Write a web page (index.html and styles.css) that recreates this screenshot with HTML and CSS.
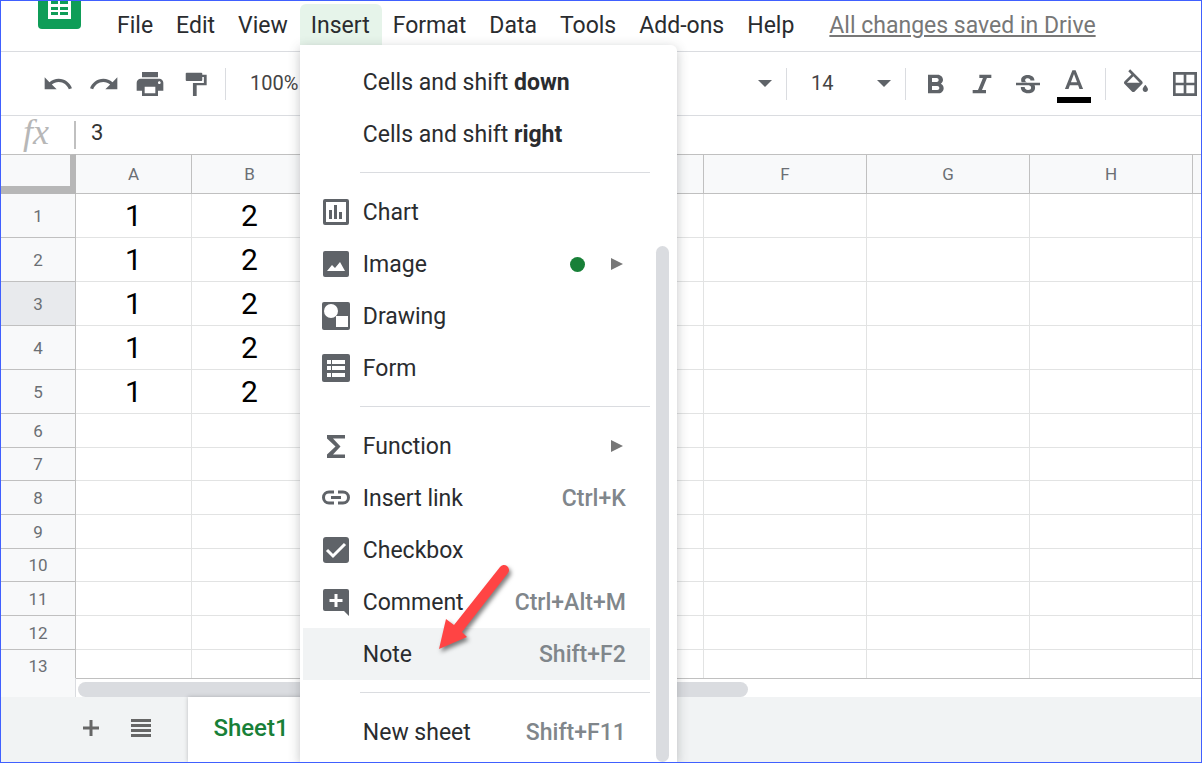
FILE: index.html
```html
<!DOCTYPE html>
<html lang="en">
<head>
    <meta charset="UTF-8">
    <title>Spreadsheet</title>
    <link rel="stylesheet" href="styles.css">
</head>
<body>
    <div class="app">

        <!-- Menu bar -->
        <header class="menubar">
            <svg class="logo" viewBox="0 0 43 28" aria-hidden="true">
                <path d="M0 0h43v24a4 4 0 0 1-4 4H4a4 4 0 0 1-4-4z" fill="#0f9d58"/>
                <path d="M10 0h23v18H10z" fill="#fff"/>
                <path d="M13 0h7v3h-7zM22 0h8v3h-8zM13 6h7v3h-7zM22 6h8v3h-8zM13 11h7v3h-7zM22 11h8v3h-8z" fill="#0f9d58"/>
            </svg>
            <nav class="menus">
                <button type="button">File</button>
                <button type="button">Edit</button>
                <button type="button">View</button>
                <div class="open-menu">
                    <button type="button" class="active">Insert</button>

                    <!-- Insert menu -->
                    <div class="dropdown">
                        <div class="dropdown-list">
                            <button type="button" class="item"><span class="icon"></span><span>Cells and shift <b>down</b></span></button>
                            <button type="button" class="item"><span class="icon"></span><span>Cells and shift <b>right</b></span></button>
                            <hr>
                            <button type="button" class="item">
                                <svg class="icon" viewBox="0 0 30 30"><path fill-rule="evenodd" d="M4 2h22a2 2 0 0 1 2 2v22a2 2 0 0 1-2 2H4a2 2 0 0 1-2-2V4a2 2 0 0 1 2-2zm1 3v20h20V5zM8 13h3v9H8zM13 8h3v14h-3zM18 15h3v7h-3z"/></svg>
                                <span>Chart</span>
                            </button>
                            <button type="button" class="item">
                                <svg class="icon" viewBox="0 0 30 30"><rect x="2" y="2" width="26" height="26" rx="2"/><path class="cut" d="M6 22l5-6 3 3 5-6 5 9z"/></svg>
                                <span>Image</span>
                                <span class="dot"></span>
                                <span class="submenu"></span>
                            </button>
                            <button type="button" class="item">
                                <svg class="icon" viewBox="0 0 30 30"><rect x="1" y="1" width="28" height="28" rx="2"/><circle class="cut" cx="10" cy="10" r="7"/><path class="cut" d="M15 15h12v11H15z"/></svg>
                                <span>Drawing</span>
                            </button>
                            <button type="button" class="item">
                                <svg class="icon" viewBox="0 0 30 30"><rect x="1" y="1" width="28" height="28" rx="2"/><path class="cut" d="M6 7h4v4H6zM11 7h13v4H11zM6 13h4v4H6zM11 13h13v4H11zM6 20h4v4H6zM11 20h13v4H11z"/></svg>
                                <span>Form</span>
                            </button>
                            <hr>
                            <button type="button" class="item">
                                <svg class="icon" viewBox="0 0 30 30"><path d="M6 4h18v3.500H12l7.500 8-7.500 8h12V27H6v-3.500l8.500-8L6 7.500z"/></svg>
                                <span>Function</span>
                                <span class="submenu"></span>
                            </button>
                            <button type="button" class="item">
                                <svg class="icon" viewBox="0 0 30 30"><path class="line" d="M13 9H8a5.500 5.500 0 0 0 0 11h5M17 9h5a5.500 5.500 0 0 1 0 11h-5M10 14.500h10"/></svg>
                                <span>Insert link</span>
                                <kbd>Ctrl+K</kbd>
                            </button>
                            <button type="button" class="item">
                                <svg class="icon" viewBox="0 0 30 30"><rect x="2" y="2" width="26" height="26" rx="3"/><path class="check" d="M6 15l6 6L24 9"/></svg>
                                <span>Checkbox</span>
                            </button>
                            <button type="button" class="item">
                                <svg class="icon" viewBox="0 0 30 30"><path d="M4 2h22a2 2 0 0 1 2 2v25l-5-5H4a2 2 0 0 1-2-2V4a2 2 0 0 1 2-2z"/><path class="check" d="M15 7v13M8.500 13.500h13"/></svg>
                                <span>Comment</span>
                                <kbd>Ctrl+Alt+M</kbd>
                            </button>
                            <button type="button" class="item selected"><span class="icon"></span><span>Note</span><kbd>Shift+F2</kbd></button>
                            <hr>
                            <button type="button" class="item"><span class="icon"></span><span>New sheet</span><kbd>Shift+F11</kbd></button>
                        </div>
                        <div class="dropdown-scroll"></div>
                        <svg class="pointer" viewBox="430 560 90 100" aria-hidden="true">
                            <path d="M438 649l7-30 8 6 46-58a5 5 0 0 1 8 6l-46 59 5 5z"/>
                        </svg>
                    </div>
                </div>
                <button type="button">Format</button>
                <button type="button">Data</button>
                <button type="button">Tools</button>
                <button type="button">Add-ons</button>
                <button type="button">Help</button>
            </nav>
            <a class="saved" href="#">All changes saved in Drive</a>
        </header>

        <!-- Toolbar -->
        <div class="toolbar">
            <button type="button" aria-label="Undo"><svg viewBox="0 0 24 24"><path d="M12.500 8c-2.650 0-5.050.99-6.900 2.600L2 7v9h9l-3.620-3.620c1.390-1.160 3.160-1.880 5.120-1.880 3.540 0 6.550 2.310 7.600 5.500l2.370-.78C21.080 11.030 17.150 8 12.500 8z"/></svg></button>
            <button type="button" aria-label="Redo"><svg viewBox="0 0 24 24"><path d="M18.400 10.600C16.550 8.990 14.150 8 11.500 8c-4.650 0-8.580 3.030-9.960 7.220L3.900 16c1.050-3.190 4.050-5.500 7.600-5.500 1.950 0 3.730.72 5.120 1.880L13 16h9V7l-3.600 3.600z"/></svg></button>
            <button type="button" aria-label="Print"><svg viewBox="0 0 24 24"><path d="M19 8H5c-1.660 0-3 1.340-3 3v6h4v4h12v-4h4v-6c0-1.660-1.340-3-3-3zm-3 11H8v-5h8v5zm3-7c-.55 0-1-.45-1-1s.45-1 1-1 1 .45 1 1-.45 1-1 1zm-1-9H6v4h12V3z"/></svg></button>
            <button type="button" aria-label="Paint format"><svg viewBox="0 0 24 24"><path d="M5 3.500h11a.7.7 0 0 1 .7.7V5H20v8h-7.500v8h-2.800V11.200h8.200V6.800h-1.200V9a.7.7 0 0 1-.7.7H5a.7.7 0 0 1-.7-.7V4.200a.7.7 0 0 1 .7-.7z"/></svg></button>
            <span class="divider"></span>
            <div class="picker zoom"><select aria-label="Zoom"><option>100%</option></select></div>
            <div class="picker font"><select aria-label="Font"><option>Arial</option></select></div>
            <span class="divider"></span>
            <div class="picker size"><select aria-label="Font size"><option>14</option></select></div>
            <span class="divider"></span>
            <button type="button" aria-label="Bold"><svg viewBox="0 0 24 24"><path d="M15.600 11.790c.97-.67 1.650-1.770 1.650-2.790 0-2.260-1.750-4-4-4H6v14h8.040c2.090 0 3.710-1.700 3.710-3.790 0-1.520-.86-2.820-2.150-3.420zM9 7.500h3.500c.83 0 1.500.67 1.500 1.500s-.67 1.500-1.500 1.500H9v-3zm4 9H9v-3h4c.83 0 1.500.67 1.500 1.500s-.67 1.500-1.500 1.500z"/></svg></button>
            <button type="button" aria-label="Italic"><svg viewBox="0 0 24 24"><path d="M10 5v2.500h2.700L9 16.500H5V19h10v-2.500h-3l3.700-9H19V5z"/></svg></button>
            <button type="button" aria-label="Strikethrough"><svg viewBox="0 0 24 24"><path d="M7.240 9.750c-.26-.48-.39-1.030-.39-1.670 0-2.500 2.400-3.780 5-3.780 3 0 5 1.700 5 4h-3c0-1-.8-1.700-2-1.700-1.100 0-2 .5-2 1.500 0 .8.500 1.200 1.500 1.650zM21 12v-2H3v2h9.620c1.400.5 1.700 1 1.700 1.800 0 1-.8 1.700-2.300 1.700-1.600 0-2.500-.9-2.500-2.200H6.600c0 3 2.200 4.700 5.400 4.700 3.100 0 5.300-1.500 5.300-4.200 0-.7-.1-1.300-.4-1.800z" transform="translate(0 1)"/></svg></button>
            <button type="button" class="text-color" aria-label="Text color"><svg viewBox="0 0 24 24"><path d="M10.800 4L5.200 18h2.700l1-2.800h6.200l1 2.800h2.700L13.200 4h-2.400zm-1.100 9L12 6.800 14.300 13H9.700z"/></svg></button>
            <span class="divider"></span>
            <button type="button" aria-label="Fill color"><svg viewBox="0 0 24 24"><path d="M16.560 8.940L7.620 0 6.210 1.410l2.380 2.380-5.150 5.150c-.59.59-.59 1.540 0 2.120l5.500 5.500c.29.290.68.440 1.060.44s.77-.15 1.060-.44l5.500-5.500c.59-.58.59-1.530 0-2.120zM5.210 10L10 5.210 14.790 10H5.210zM19 11.500s-2 2.170-2 3.500c0 1.100.9 2 2 2s2-.9 2-2c0-1.330-2-3.500-2-3.500z" transform="translate(0 1)"/></svg></button>
            <button type="button" aria-label="Borders"><svg viewBox="0 0 24 24"><path fill-rule="evenodd" d="M3 3v18h18V3H3zm8 16H5v-6h6v6zm0-8H5V5h6v6zm8 8h-6v-6h6v6zm0-8h-6V5h6v6z"/></svg></button>
        </div>

        <!-- Formula bar -->
        <div class="formula">
            <label for="formula">fx</label>
            <input type="text" id="formula" value="3">
        </div>

        <!-- Grid -->
        <main class="sheet">
            <table>
                <colgroup>
                    <col class="col-head">
                    <col class="col-s"><col class="col-s"><col class="col-s"><col class="col-m">
                    <col class="col-l"><col class="col-l"><col class="col-l"><col class="col-l"><col class="col-l">
                </colgroup>
                <thead>
                    <tr><th class="corner"></th><th>A</th><th>B</th><th>C</th><th>D</th><th>E</th><th>F</th><th>G</th><th>H</th><th></th></tr>
                </thead>
                <tbody>
                    <tr><th>1</th><td>1</td><td>2</td><td></td><td></td><td></td><td></td><td></td><td></td><td></td></tr>
                    <tr><th>2</th><td>1</td><td>2</td><td></td><td></td><td></td><td></td><td></td><td></td><td></td></tr>
                    <tr><th class="current">3</th><td>1</td><td>2</td><td></td><td></td><td></td><td></td><td></td><td></td><td></td></tr>
                    <tr><th>4</th><td>1</td><td>2</td><td></td><td></td><td></td><td></td><td></td><td></td><td></td></tr>
                    <tr><th>5</th><td>1</td><td>2</td><td></td><td></td><td></td><td></td><td></td><td></td><td></td></tr>
                    <tr><th>6</th><td></td><td></td><td></td><td></td><td></td><td></td><td></td><td></td><td></td></tr>
                    <tr><th>7</th><td></td><td></td><td></td><td></td><td></td><td></td><td></td><td></td><td></td></tr>
                    <tr><th>8</th><td></td><td></td><td></td><td></td><td></td><td></td><td></td><td></td><td></td></tr>
                    <tr><th>9</th><td></td><td></td><td></td><td></td><td></td><td></td><td></td><td></td><td></td></tr>
                    <tr><th>10</th><td></td><td></td><td></td><td></td><td></td><td></td><td></td><td></td><td></td></tr>
                    <tr><th>11</th><td></td><td></td><td></td><td></td><td></td><td></td><td></td><td></td><td></td></tr>
                    <tr><th>12</th><td></td><td></td><td></td><td></td><td></td><td></td><td></td><td></td><td></td></tr>
                    <tr><th>13</th><td></td><td></td><td></td><td></td><td></td><td></td><td></td><td></td><td></td></tr>
                </tbody>
            </table>
        </main>
        <div class="hscroll">
            <div class="hscroll-head"></div>
            <div class="hscroll-track">
                <div class="hscroll-thumb"></div>
            </div>
        </div>

        <!-- Sheet tabs -->
        <footer class="tabs">
            <button type="button" aria-label="Add sheet"><svg viewBox="0 0 20 20"><path d="M8.500 2h3v6.500H18v3h-6.500V18h-3v-6.500H2v-3h6.500z"/></svg></button>
            <button type="button" aria-label="All sheets"><svg viewBox="0 0 20 20"><path d="M0 1h20v3H0zM0 6h20v3H0zM0 11h20v3H0zM0 16h20v3H0z"/></svg></button>
            <button type="button" class="tab">Sheet1</button>
        </footer>
    </div>
</body>
</html>
```
FILE: styles.css
```css
* {
    box-sizing: border-box;
}

body {
    margin: 0;
    font-family: Roboto, Arial, sans-serif;
    color: #2a2c2f;
    background-color: #fff;
}

button {
    border: none;
    background: none;
    padding: 0;
    font-family: inherit;
    color: inherit;
    cursor: pointer;
}

.app {
    display: flex;
    flex-direction: column;
    height: 100vh;
    border: 1px solid #4060ff;
    overflow: hidden;
}

/* Menu bar */
.menubar {
    display: flex;
    flex: none;
    height: 51px;
    padding-left: 37px;
    border-bottom: 1px solid #dadce0;
}

.logo {
    flex: none;
    width: 43px;
    height: 28px;
    margin-right: 25px;
}

.menus {
    display: flex;
    height: 44px;
    padding-top: 3px;
}

.menus > button,
.active {
    height: 41px;
    padding: 2px 12px 0 11px;
    font-size: 23px;
    white-space: nowrap;
}

.open-menu {
    position: relative;
}

.active {
    background-color: #e6f4ea;
    border-radius: 6px 6px 0 0;
}

.saved {
    margin-left: 23px;
    line-height: 50px;
    font-size: 23px;
    color: #777;
    white-space: nowrap;
}

/* Insert menu */
.dropdown {
    position: absolute;
    z-index: 10;
    top: 100%;
    left: 0;
    display: flex;
    width: 377px;
    height: calc(100vh - 46px);
    padding: 11px 8px 0 3px;
    background-color: #fff;
    border-radius: 0 6px 0 0;
    box-shadow: 0 3px 12px rgba(60, 64, 67, 0.3);
}

.dropdown-list {
    flex: 1;
}

.dropdown-scroll {
    width: 13px;
    margin: 190px 0 0 6px;
    background-color: #dadce0;
    border-radius: 7px;
}

.item {
    display: flex;
    align-items: center;
    width: 100%;
    height: 52px;
    padding: 0 24px 0 18px;
    font-size: 23px;
    text-align: left;
    white-space: nowrap;
}

.item b {
    font-weight: 700;
}

.item kbd {
    margin-left: auto;
    font-family: inherit;
    font-weight: 500;
    color: #80868b;
}

.selected {
    background-color: #f1f3f4;
}

.dropdown hr {
    height: 1px;
    margin: 12px 0 13px 57px;
    border: none;
    background-color: #dadce0;
}

.icon {
    flex: none;
    width: 30px;
    height: 30px;
    margin-right: 12px;
    fill: #5f6368;
}

.icon .cut {
    fill: #fff;
}

.icon .line {
    fill: none;
    stroke: #5f6368;
    stroke-width: 3;
}

.icon .check {
    fill: none;
    stroke: #fff;
    stroke-width: 3;
}

.dot {
    width: 15px;
    height: 15px;
    margin-left: auto;
    margin-right: 26px;
    border-radius: 50%;
    background-color: #188038;
}

.submenu {
    margin-left: auto;
    margin-right: 3px;
    border-left: 12px solid #777;
    border-top: 6px solid transparent;
    border-bottom: 6px solid transparent;
}

.dot + .submenu {
    margin-left: 0;
}

.pointer {
    position: absolute;
    top: 515px;
    left: 131px;
    width: 90px;
    height: 100px;
    fill: #ff4444;
    filter: drop-shadow(2px 3px 2px rgba(0, 0, 0, 0.5));
}

/* Toolbar */
.toolbar {
    display: flex;
    flex: none;
    align-items: center;
    height: 64px;
    padding-left: 34px;
    border-bottom: 1px solid #dadce0;
}

.toolbar button {
    display: flex;
    flex: none;
    flex-direction: column;
    align-items: center;
    width: 46px;
}

.toolbar svg {
    width: 32px;
    height: 32px;
    fill: #5f6368;
}

.toolbar button:last-child {
    margin-left: 3px;
}

.text-color::after {
    content: "";
    width: 34px;
    height: 6px;
    background-color: #000;
}

.divider {
    flex: none;
    width: 1px;
    height: 32px;
    background-color: #dadce0;
}

.toolbar button + .divider {
    margin-left: 6px;
}

.divider + button {
    margin-left: 7px;
}

.toolbar .text-color + .divider {
    margin-left: 8px;
}

.picker {
    display: flex;
    flex: none;
    align-items: center;
    padding: 0 14px 0 24px;
}

.picker::after {
    content: "";
    border-top: 7px solid #5f6368;
    border-left: 7px solid transparent;
    border-right: 7px solid transparent;
}

.picker select {
    flex: 1;
    min-width: 0;
    appearance: none;
    border: none;
    padding: 0 0 2px;
    background: none;
    font-family: inherit;
    font-size: 20px;
    color: #444;
}

.zoom {
    width: 120px;
}

.font {
    width: 440px;
}

.size {
    width: 118px;
}

/* Formula bar */
.formula {
    display: flex;
    flex: none;
    align-items: center;
    height: 38px;
}

.formula label {
    width: 75px;
    border-right: 2px solid #c0c0c0;
    padding: 0 0 6px 22px;
    line-height: 22px;
    font-family: "Liberation Serif", serif;
    font-style: italic;
    font-size: 36px;
    color: #b7b7b7;
}

.formula input {
    flex: 1;
    border: none;
    padding: 0 15px 5px;
    font-family: inherit;
    font-size: 22px;
    color: #333;
}

/* Grid */
.sheet {
    flex: 1;
    min-height: 0;
    overflow: hidden;
}

table {
    table-layout: fixed;
    width: 1355px;
    border-collapse: separate;
    border-spacing: 0;
}

.col-head {
    width: 75px;
}

.col-s {
    width: 116px;
}

.col-m {
    width: 117px;
}

.col-l {
    width: 163px;
}

th {
    padding: 0;
    border-right: 1px solid #c0c0c0;
    border-bottom: 1px solid #c0c0c0;
    background-color: #f8f9fa;
    font-size: 17px;
    font-weight: 400;
    color: #6b6f74;
}

thead th {
    height: 40px;
    border-top: 1px solid #c0c0c0;
}

thead .corner {
    border-right: 6px solid #b7b7b7;
    border-bottom: 8px solid #b7b7b7;
}

td {
    padding: 0;
    border-right: 1px solid #e2e3e3;
    border-bottom: 1px solid #e2e3e3;
    font-size: 30px;
    line-height: 30px;
    text-align: center;
    color: #000;
}

tbody tr {
    height: 34px;
}

tbody tr:nth-child(-n+5) {
    height: 44px;
}

tbody tr:nth-child(3n+7) {
    height: 33px;
}

.current {
    background-color: #e8eaed;
}

/* Horizontal scrollbar */
.hscroll {
    display: flex;
    flex: none;
    height: 19px;
}

.hscroll-head {
    width: 75px;
    border-right: 1px solid #dadce0;
    background-color: #f8f9fa;
}

.hscroll-track {
    flex: 1;
    padding: 3px 0 0 2px;
    border-top: 1px solid #c0c0c0;
}

.hscroll-thumb {
    width: 670px;
    height: 15px;
    border-radius: 8px;
    background-color: #dadce0;
}

/* Sheet tabs */
.tabs {
    display: flex;
    flex: none;
    height: 65px;
    padding-left: 65px;
    background-color: #f1f3f4;
}

.tabs button {
    width: 50px;
}

.tabs svg {
    width: 20px;
    height: 20px;
    fill: #666;
}

.tabs .tab {
    width: 126px;
    margin-left: 22px;
    padding-bottom: 3px;
    background-color: #fff;
    box-shadow: 0 0 4px rgba(60, 64, 67, 0.3);
    font-size: 24px;
    font-weight: 500;
    color: #188038;
}
```
